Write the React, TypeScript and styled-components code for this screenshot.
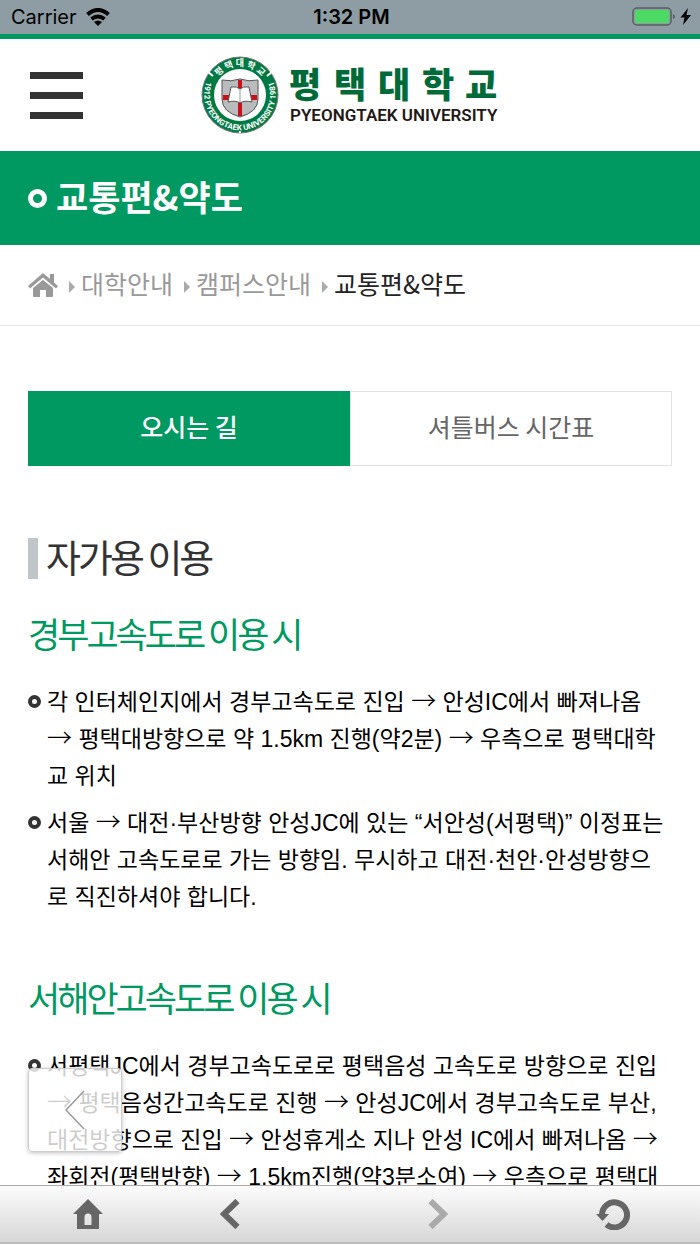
import React from "react";
import styled, { createGlobalStyle } from "styled-components";

const GREEN = "#009962";
const KR = `"Noto Sans CJK KR", sans-serif`;

const GlobalStyle = createGlobalStyle`
  * { box-sizing: border-box; }
  html, body { margin: 0; padding: 0; background: #fff; }
  body { font-family: "Liberation Sans", ${KR}; color: #000; }
  h1, h2, h3, p, ul, ol { margin: 0; padding: 0; font-weight: 400; }
  ul, ol { list-style: none; }
  a { color: inherit; text-decoration: none; }
  button { border: 0; padding: 0; background: none; font: inherit; color: inherit; cursor: pointer; }
  svg { display: block; }
`;

const Screen = styled.div`
  display: flex;
  flex-direction: column;
  height: 100vh;
`;

const StatusBar = styled.div`
  display: grid;
  grid-template-columns: 1fr auto 1fr;
  align-items: center;
  flex: none;
  height: 34px;
  padding: 0 8px 0 11px;
  background: #8e9ca3;
  font-family: Inter, sans-serif;
  font-size: 20px;
  line-height: 24px;
`;

const StatusGroup = styled.div<{ $end?: boolean }>`
  display: flex;
  align-items: center;
  gap: 9px;
  justify-content: ${(p) => (p.$end ? "flex-end" : "flex-start")};
`;

const Clock = styled.span`
  font-weight: 600;
`;

const Page = styled.div`
  flex: 1;
  min-height: 0;
  overflow-y: auto;
  scrollbar-width: none;
  border-top: 5px solid ${GREEN};
`;

const Header = styled.header`
  display: grid;
  grid-template-columns: 1fr auto 1fr;
  align-items: center;
  height: 112px;
  padding: 0 30px;
`;

const MenuButton = styled.button`
  display: flex;
  flex-direction: column;
  gap: 13px;
  width: 53px;
`;

const MenuLine = styled.span`
  height: 7px;
  background: #333;
`;

const TitleBar = styled.div`
  display: flex;
  align-items: center;
  gap: 9px;
  height: 94px;
  padding: 0 28px;
  background: ${GREEN};
  color: #fff;
`;

const Ring = styled.span<{ $large?: boolean }>`
  flex: none;
  width: ${(p) => (p.$large ? 19 : 13)}px;
  height: ${(p) => (p.$large ? 19 : 13)}px;
  border: ${(p) => (p.$large ? 5 : 4)}px solid ${(p) => (p.$large ? "#fff" : "#333")};
  border-radius: 50%;
`;

const PageTitle = styled.h1`
  padding-bottom: 4px;
  font-family: ${KR};
  font-size: 35px;
  font-weight: 700;
  line-height: 48px;
`;

const Breadcrumb = styled.nav`
  border-bottom: 1px solid #e6e6e6;
`;

const Crumbs = styled.ol`
  display: flex;
  align-items: center;
  height: 80px;
  padding: 0 28px;
  font-family: ${KR};
  font-size: 25px;
  line-height: 36px;
  color: #999;
`;

const Crumb = styled.li<{ $current?: boolean }>`
  display: flex;
  align-items: center;
  color: ${(p) => (p.$current ? "#222" : "inherit")};
`;

const CrumbLink = styled.a`
  padding-bottom: 4px;
`;

const CrumbArrow = styled.svg`
  margin: 4px 6px 0 11px;
`;

const Content = styled.main`
  padding: 65px 28px 80px;
`;

const Tabs = styled.div`
  display: grid;
  grid-template-columns: 1fr 1fr;
  margin-bottom: 64px;
`;

const Tab = styled.button<{ $active?: boolean }>`
  height: 75px;
  padding-bottom: 5px;
  border: 1px solid ${(p) => (p.$active ? GREEN : "#e2e2e2")};
  background: ${(p) => (p.$active ? GREEN : "#fff")};
  color: ${(p) => (p.$active ? "#fff" : "#666")};
  font-family: ${KR};
  font-size: 25px;
  font-weight: ${(p) => (p.$active ? 500 : 400)};
`;

const SectionTitle = styled.h2`
  display: flex;
  align-items: center;
  gap: 8px;
  font-family: ${KR};
  font-size: 38px;
  letter-spacing: -3px;
  line-height: 52px;
  color: #333;

  &::before {
    content: "";
    width: 10px;
    height: 41px;
    margin-top: 4px;
    background: #bfc5c9;
  }
`;

const RouteTitle = styled.h3`
  margin: 25px 0;
  font-family: ${KR};
  font-size: 35px;
  letter-spacing: -3px;
  line-height: 52px;
  color: ${GREEN};
`;

const RouteList = styled.ul`
  display: flex;
  flex-direction: column;
  gap: 10px;
  margin-bottom: 55px;
  padding-right: 4px;
`;

const RouteItem = styled.li`
  display: flex;
  gap: 6px;
  font-size: 23px;
  line-height: 37px;

  ${Ring} {
    margin-top: 11px;
  }
`;

const Arrow = styled.span`
  font-family: ${KR};
  font-size: 25px;
  font-weight: 300;
  line-height: 24px;
`;

const BackButton = styled.button`
  position: fixed;
  left: 28px;
  bottom: 92px;
  display: flex;
  align-items: center;
  justify-content: center;
  width: 94px;
  height: 84px;
  border: 1px solid #ccc;
  border-radius: 4px;
  background: rgba(255, 255, 255, 0.8);
  box-shadow: 0 1px 4px rgba(0, 0, 0, 0.25);
`;

const Toolbar = styled.nav`
  display: grid;
  grid-template-columns: repeat(4, 1fr);
  flex: none;
  height: 59px;
  border-top: 1px solid #aaa;
  border-bottom: 2px solid #bbb;
  background: linear-gradient(#fcfcfc, #d7d7d7);
`;

const ToolButton = styled.button<{ $inset?: number }>`
  display: flex;
  align-items: center;
  justify-content: center;
  padding-right: ${(p) => p.$inset ?? 0}px;
  color: #666;

  &:disabled {
    color: #aaa;
  }
`;

const Logo = () => (
  <svg width="300" height="80" viewBox="0 0 300 80" role="img" aria-label="평택대학교">
    <circle cx="40" cy="40" r="38" fill="#007a43" stroke="#777" strokeWidth="1" />
    <circle cx="40" cy="40" r="26" fill="#fff" />
    <g stroke="#fff" strokeWidth="2">
      <path d="M8 17l5 4M72 17l-5 4M40 76v2" />
    </g>
    <defs>
      <path id="seal-top" d="M11.500 40a28.500 28.500 0 0 1 57 0" />
      <path id="seal-bottom" d="M8.800 22A35.800 35.800 0 1 0 71.200 22" />
    </defs>
    <text fill="#fff" fontFamily={KR} fontSize="9" fontWeight="700" textAnchor="middle">
      <textPath href="#seal-top" startOffset="50%">평 택 대 학 교</textPath>
    </text>
    <text fill="#fff" fontFamily="Roboto, sans-serif" fontSize="8" fontWeight="700" textAnchor="middle">
      <textPath href="#seal-bottom" startOffset="50%">1912 PYEONGTAEK UNIVERSITY 1981</textPath>
    </text>
    <path d="M22 25q9 2 18-1 9 3 18 1v19q0 13-18 18-18-5-18-18z" fill="#b9bbbc" stroke="#555" strokeWidth="1" />
    <path d="M38 25h4v36h-4zM23 40h34v5H23z" fill="#c9101c" />
    <path d="M31 32q6-1 9 2 3-3 9-2l3 15q-8-2-12 1-4-3-12-1z" fill="#fff" stroke="#555" strokeWidth="1" />
    <path d="M40 34v13" stroke="#999" />
    <text x="89 134 178 222 265" y="43" fill="#006b38" fontFamily={KR} fontSize="35" fontWeight="900">
      평택대학교
    </text>
    <text x="90" y="66" fill="#231815" fontFamily="Roboto, sans-serif" fontSize="17" fontWeight="600">
      PYEONGTAEK UNIVERSITY
    </text>
  </svg>
);

const Wifi = () => (
  <svg width="24" height="18" viewBox="0 0 24 18" fill="none" stroke="#000" strokeWidth="4">
    <path d="M1.500 6.500q10.500-9 21 0M5.500 11q6.500-5 13 0" />
    <path d="M8 14q4-3 8 0l-4 4z" fill="#000" stroke="none" />
  </svg>
);

const Battery = () => (
  <svg width="60" height="20" viewBox="0 0 60 20">
    <rect x="1" y="1" width="38" height="17" rx="4" fill="none" stroke="#555e63" strokeWidth="1.500" />
    <rect x="3" y="3" width="34" height="13" rx="2" fill="#4cd964" />
    <path d="M41 7q2 .5 2 2.500t-2 2.500z" fill="#555e63" />
    <path d="M56 1l-7.500 9.500h4L51 18l8-10h-4.500z" fill="#000" />
  </svg>
);

const HomeSolid = () => (
  <svg width="30" height="26" viewBox="0 0 30 26" fill="#999">
    <path d="M15 1L0 14l2 2.500L15 5.500l13 11 2-2.500-4-3.500V2h-4v5z" />
    <path d="M15 8L5 16v8q0 1 1 1h6v-7h6v7h6q1 0 1-1v-8z" />
  </svg>
);

const crumbs = ["대학안내", "캠퍼스안내", "교통편&약도"];

const routes = [
  {
    title: "경부고속도로 이용 시",
    items: [
      "각 인터체인지에서 경부고속도로 진입 → 안성IC에서 빠져나옴 → 평택대방향으로 약 1.5km 진행(약2분) → 우측으로 평택대학교 위치",
      "서울 → 대전·부산방향 안성JC에 있는 “서안성(서평택)” 이정표는 서해안 고속도로로 가는 방향임. 무시하고 대전·천안·안성방향으로 직진하셔야 합니다.",
    ],
  },
  {
    title: "서해안고속도로 이용 시",
    items: [
      "서평택JC에서 경부고속도로로 평택음성 고속도로 방향으로 진입 → 평택음성간고속도로 진행 → 안성JC에서 경부고속도로 부산, 대전방향으로 진입 → 안성휴게소 지나 안성 IC에서 빠져나옴 → 좌회전(평택방향) → 1.5km진행(약3분소여) → 우측으로 평택대",
    ],
  },
];

const withArrows = (text: string) =>
  text.split("→").map((part, i) => (
    <React.Fragment key={i}>
      {i > 0 && <Arrow>→</Arrow>}
      {part}
    </React.Fragment>
  ));

export default function App() {
  return (
    <Screen>
      <GlobalStyle />
      <StatusBar>
        <StatusGroup>
          Carrier
          <Wifi />
        </StatusGroup>
        <Clock>1:32 PM</Clock>
        <StatusGroup $end>
          <Battery />
        </StatusGroup>
      </StatusBar>
      <Page>
        <Header>
          <MenuButton aria-label="메뉴">
            <MenuLine />
            <MenuLine />
            <MenuLine />
          </MenuButton>
          <a href="#home">
            <Logo />
          </a>
        </Header>
        <TitleBar>
          <Ring $large />
          <PageTitle>교통편&amp;약도</PageTitle>
        </TitleBar>
        <Breadcrumb>
          <Crumbs>
            <Crumb>
              <a href="#home" aria-label="홈">
                <HomeSolid />
              </a>
            </Crumb>
            {crumbs.map((name, i) => (
              <Crumb key={name} $current={i === crumbs.length - 1}>
                <CrumbArrow width="6" height="12" viewBox="0 0 6 12" fill="#aaa">
                  <path d="M0 0l6 6-6 6z" />
                </CrumbArrow>
                <CrumbLink href={`#crumb-${i}`}>{name}</CrumbLink>
              </Crumb>
            ))}
          </Crumbs>
        </Breadcrumb>
        <Content>
          <Tabs role="tablist">
            <Tab role="tab" aria-selected $active>
              오시는 길
            </Tab>
            <Tab role="tab" aria-selected={false}>
              셔틀버스 시간표
            </Tab>
          </Tabs>
          <SectionTitle>자가용 이용</SectionTitle>
          {routes.map((route) => (
            <section key={route.title}>
              <RouteTitle>{route.title}</RouteTitle>
              <RouteList>
                {route.items.map((text) => (
                  <RouteItem key={text}>
                    <Ring />
                    <p>{withArrows(text)}</p>
                  </RouteItem>
                ))}
              </RouteList>
            </section>
          ))}
        </Content>
      </Page>
      <BackButton aria-label="이전">
        <svg width="20" height="40" viewBox="0 0 20 40" fill="none" stroke="#999" strokeWidth="1.500">
          <path d="M19 1L1 20l18 19" />
        </svg>
      </BackButton>
      <Toolbar>
        <ToolButton aria-label="홈">
          <svg width="30" height="30" viewBox="0 0 30 30" fill="currentColor">
            <path fillRule="evenodd" d="M15 0l15 15h-4v15H4V15H0zM11.500 26h7v-8q0-3.500-3.500-3.500T11.500 18z" />
          </svg>
        </ToolButton>
        <ToolButton aria-label="뒤로" $inset={66}>
          <svg width="20" height="30" viewBox="0 0 20 30" fill="none" stroke="currentColor" strokeWidth="6">
            <path d="M17.500 2L4 15l13.500 13" />
          </svg>
        </ToolButton>
        <ToolButton aria-label="앞으로" disabled>
          <svg width="20" height="30" viewBox="0 0 20 30" fill="none" stroke="currentColor" strokeWidth="6">
            <path d="M2.500 2L16 15 2.500 28" />
          </svg>
        </ToolButton>
        <ToolButton aria-label="새로고침">
          <svg width="34" height="31" viewBox="0 0 34 31" fill="none" stroke="currentColor" strokeWidth="6">
            <path d="M6 16a12.500 12.500 0 1 1 4.500 9.500" />
            <path d="M0 15h13l-6.500 7z" fill="currentColor" stroke="none" />
          </svg>
        </ToolButton>
      </Toolbar>
    </Screen>
  );
}
